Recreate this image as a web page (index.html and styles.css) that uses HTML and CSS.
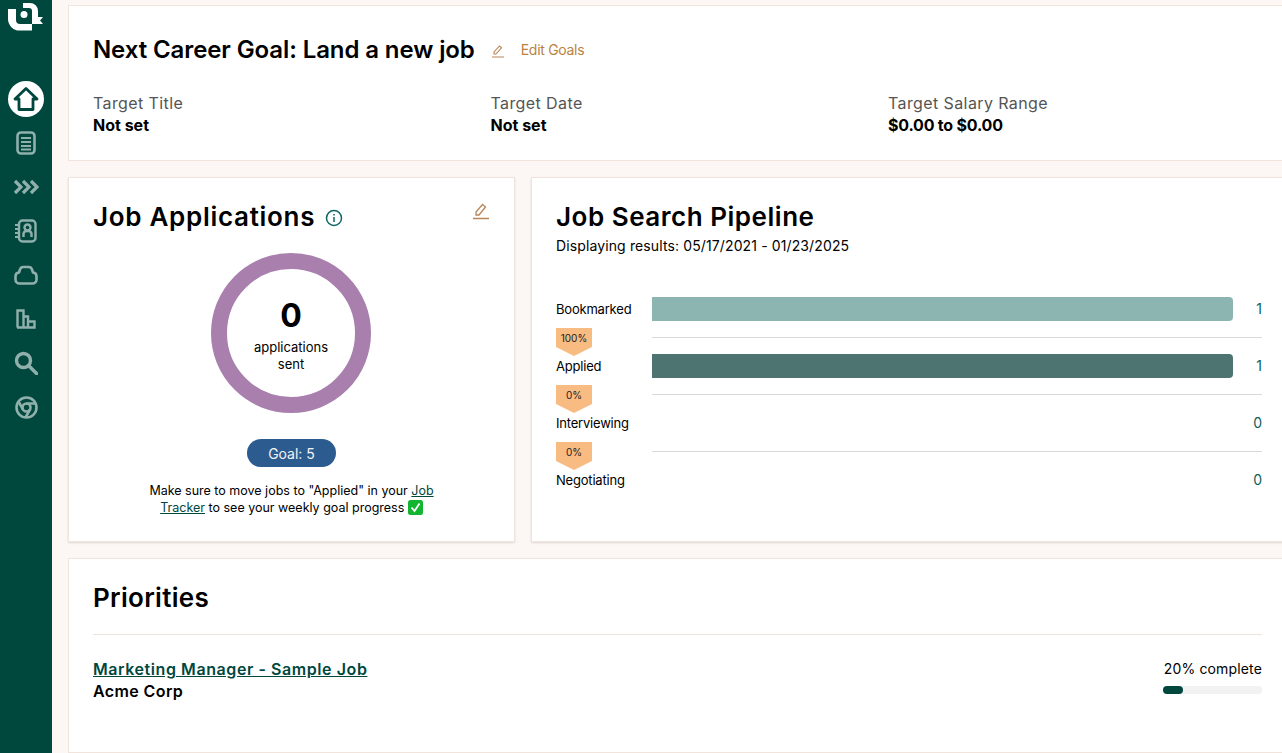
FILE: index.html
```html
<!DOCTYPE html>
<html lang="en">
<head>
<meta charset="utf-8">
<title>Dashboard</title>
<link rel="stylesheet" href="styles.css">
</head>
<body>
<div class="app">
  <nav class="sidebar">
    <svg class="logo" width="52" height="32" viewBox="0 0 52 32" fill="#fff">
      <path d="M8 9H16V20a4 4 0 0 0 4 4H32V30.500H19.500A11.500 11.500 0 0 1 8 19Z"/>
      <path d="M23 3H30a8 8 0 0 1 8 8V17H32V11a3 3 0 0 0-3-3H23Z"/>
      <path d="M32 17H43L40 20.500 43 24H32Z"/>
      <circle cx="24" cy="14.500" r="3.500"/>
    </svg>
    <div class="nav-list">
      <a class="nav-item active">
        <svg width="26" height="26" viewBox="0 0 26 26" fill="none" stroke="#00473e" stroke-width="2.800" stroke-linejoin="round"><path d="M13 2.500 2 13H6V23.500H20V13H24Z"/></svg>
      </a>
      <a class="nav-item">
        <svg width="20" height="24" viewBox="0 0 20 24" fill="none" stroke="#8fb0ab" stroke-width="2.600"><rect x="1.500" y="1.500" width="17" height="21" rx="3.500"/><path d="M5 7h10M5 11h10M5 15h10M5 18.500h10" stroke-width="2.200"/></svg>
      </a>
      <a class="nav-item">
        <svg width="26" height="16" viewBox="0 0 26 16" fill="none" stroke="#8fb0ab" stroke-width="3.200"><path d="M2 2l6 6-6 6M10 2l6 6-6 6M18 2l6 6-6 6"/></svg>
      </a>
      <a class="nav-item">
        <svg width="22" height="24" viewBox="0 0 22 24" fill="none" stroke="#8fb0ab" stroke-width="2.400"><rect x="4" y="1.500" width="16.500" height="21" rx="3.500"/><path d="M0 6h4M0 10h4M0 14h4M0 18h4" stroke-width="2"/><circle cx="12.500" cy="8.500" r="3"/><path d="M8.500 18v-3a3 3 0 0 1 3-3h2a3 3 0 0 1 3 3v3"/></svg>
      </a>
      <a class="nav-item">
        <svg width="24" height="20" viewBox="0 0 24 20" fill="none" stroke="#8fb0ab" stroke-width="2.600" stroke-linejoin="round"><path d="M6 4.500A3.500 3.500 0 0 1 9.500 2h5A3.500 3.500 0 0 1 18 4.500L19 7.500a4 4 0 0 1 3.500 4v3a4 4 0 0 1-4 4h-13a4 4 0 0 1-4-4v-3a4 4 0 0 1 3.500-4Z"/></svg>
      </a>
      <a class="nav-item">
        <svg width="20" height="20" viewBox="0 0 20 20" fill="none" stroke="#8fb0ab" stroke-width="2.400"><path d="M1.500 18.500V1.500h6v17M7.500 7.500h4.500v11M12 12.500h6.500v6H1"/></svg>
      </a>
      <a class="nav-item">
        <svg width="24" height="24" viewBox="0 0 24 24" fill="none" stroke="#8fb0ab" stroke-width="3.400"><circle cx="9.500" cy="9.500" r="7"/><path d="M14.500 14.500 23 23" stroke-linecap="round"/></svg>
      </a>
      <a class="nav-item">
        <svg width="23" height="23" viewBox="0 0 23 23" fill="none" stroke="#8fb0ab" stroke-width="2.600"><circle cx="11.500" cy="11.500" r="10"/><circle cx="11.500" cy="11.500" r="4"/><path d="M11.500 7.500h9.500M8 13.500 3.500 5.500M15 13.500 10.500 21.500"/></svg>
      </a>
    </div>
  </nav>
  <main class="main">
    <div class="content">
      <section class="card goal-card">
        <div class="goal-head">
          <h1 class="goal-title">Next Career Goal: Land a new job</h1>
          <svg class="pencil-small" width="14" height="14" viewBox="0 0 14 14" fill="none" stroke="#b9855a" stroke-width="1.100"><path d="M3 10V8l5.500-6 2 1.800L5 10zM1 13h12"/></svg>
          <a class="edit-link">Edit Goals</a>
        </div>
        <div class="goal-grid">
          <div><div class="goal-label">Target Title</div><div class="goal-value">Not set</div></div>
          <div><div class="goal-label">Target Date</div><div class="goal-value">Not set</div></div>
          <div><div class="goal-label">Target Salary Range</div><div class="goal-value salary">$0.00 to $0.00</div></div>
        </div>
      </section>
      <div class="middle">
        <section class="card apps-card">
          <div class="apps-head">
            <h2 class="section-title apps-title">Job Applications</h2>
            <svg class="info" width="18" height="18" viewBox="0 0 18 18" fill="none" stroke="#0d6763" stroke-width="1.500"><circle cx="9" cy="9" r="7.500"/><path d="M9 8v5M9 5v1.500"/></svg>
            <svg class="pencil" width="16" height="17" viewBox="0 0 16 17" fill="none" stroke="#b9855a" stroke-width="1.300"><path d="M3 12V9l6.500-7.500 3 2.500L6 12zM0 15.500h16"/></svg>
          </div>
          <div class="donut">
            <div class="donut-num">0</div>
            <div class="donut-text">applications<br>sent</div>
          </div>
          <div class="goal-pill">Goal: 5</div>
          <p class="note">Make sure to move jobs to "Applied" in your <a class="note-link">Job Tracker</a> to see your weekly goal progress <svg class="check" width="15" height="15" viewBox="0 0 15 15"><rect width="15" height="15" rx="2.500" fill="#12b52f"/><path d="M3.500 7.500 6.500 11 11.500 3.500" fill="none" stroke="#fff" stroke-width="1.800"/></svg></p>
        </section>
        <section class="card pipe-card">
          <h2 class="section-title pipe-title">Job Search Pipeline</h2>
          <div class="pipe-sub">Displaying results: 05/17/2021 - 01/23/2025</div>
          <div class="pipe">
            <div class="pipe-row">
              <div class="pipe-name">Bookmarked</div>
              <div class="pipe-track"><div class="pipe-bar light"></div></div>
              <div class="pipe-count">1</div>
            </div>
            <div class="pipe-row">
              <div class="pipe-name">Applied</div>
              <div class="pipe-track"><div class="pipe-bar dark"></div></div>
              <div class="pipe-count">1</div>
              <div class="tag">100%</div>
            </div>
            <div class="pipe-row">
              <div class="pipe-name">Interviewing</div>
              <div class="pipe-track"></div>
              <div class="pipe-count">0</div>
              <div class="tag">0%</div>
            </div>
            <div class="pipe-row">
              <div class="pipe-name">Negotiating</div>
              <div class="pipe-track"></div>
              <div class="pipe-count">0</div>
              <div class="tag">0%</div>
            </div>
          </div>
        </section>
      </div>
      <section class="card prio-card">
        <h2 class="section-title prio-title">Priorities</h2>
        <div class="prio-row">
          <div>
            <a class="prio-job">Marketing Manager - Sample Job</a>
            <div class="prio-company">Acme Corp</div>
          </div>
          <div class="prio-progress">
            <div class="prio-pct">20% complete</div>
            <div class="progress"><div class="progress-fill"></div></div>
          </div>
        </div>
      </section>
    </div>
  </main>
</div>
</body>
</html>
```
FILE: styles.css
```css
* { box-sizing: border-box; }
html, body { margin: 0; height: 100%; overflow: hidden; }
body { font-family: Inter, "Liberation Sans", sans-serif; color: #000; background: #fcf7f5; }
h1, h2, p { margin: 0; }
.app { display: flex; height: 753px; overflow: hidden; }
.sidebar { width: 52px; flex: none; background: #00473e; display: flex; flex-direction: column; align-items: center; }
.logo { display: block; height: 32px; flex: none; }
.nav-list { margin-top: 49px; display: flex; flex-direction: column; align-items: center; }
.nav-item { width: 36px; height: 44px; display: flex; align-items: center; justify-content: center; }
.nav-item.active { height: 36px; background: #fff; border-radius: 50%; margin-bottom: 4px; }
.main { flex: 1; min-width: 0; overflow: hidden; padding: 5px 0 0 16px; }
.content { width: 1218px; display: flex; flex-direction: column; gap: 16px; }
.card { background: #fff; border: 1px solid #f1e4dd; padding: 24px; }
.goal-card { height: 156px; }
.goal-head { display: flex; align-items: center; height: 42px; }
.goal-title { font-size: 24px; font-weight: 600; letter-spacing: -0.1px; line-height: 40px; margin-top: -2px; }
.pencil-small { margin-left: 16px; }
.edit-link { margin-left: 16px; margin-top: -3px; font-size: 14px; color: #b9823f; letter-spacing: -0.3px; }
.goal-grid { display: grid; grid-template-columns: 397.500px 397.500px 1fr; margin-top: 20px; }
.goal-label { font-size: 16px; line-height: 22px; color: #555; letter-spacing: 0.4px; }
.goal-value { font-size: 16px; line-height: 22px; font-weight: 700; }
.salary { letter-spacing: -0.2px; }
.middle { display: flex; gap: 16px; height: 365px; }
.apps-card { width: 447px; flex: none; display: flex; flex-direction: column; align-items: center; padding-top: 20px; box-shadow: 0 1px 2px rgba(0,0,0,.12); }
.apps-head { width: 100%; display: flex; align-items: center; position: relative; height: 38px; }
.section-title { font-size: 26px; font-weight: 600; line-height: 38px; }
.apps-title { letter-spacing: 0.7px; }
.pipe-title { letter-spacing: 0.52px; }
.info { margin-left: 10px; margin-top: 2px; }
.pencil { position: absolute; right: 1px; top: 5px; }
.donut { width: 160px; height: 160px; border-radius: 50%; border: 16px solid #a87fad; margin: 17px 1px 0 0; display: flex; flex-direction: column; align-items: center; justify-content: center; flex: none; }
.donut-num { font-size: 32px; font-weight: 700; line-height: 40px; margin-top: 2px; }
.donut-text { font-size: 13px; line-height: 17px; text-align: center; margin-top: 3px; }
.goal-pill { margin-top: 26px; width: 89px; height: 28px; border-radius: 14px; background: #2c5b90; color: #f3f3f3; font-size: 14px; display: flex; align-items: center; justify-content: center; }
.note { margin-top: 15px; width: 310px; font-size: 12.500px; line-height: 17px; text-align: center; }
.note-link { color: #00473e; text-decoration: underline; }
.check { vertical-align: -3px; }
.pipe-card { flex: 1; padding-top: 20px; box-shadow: 0 1px 2px rgba(0,0,0,.12); }
.pipe-sub { font-size: 14px; line-height: 20px; letter-spacing: 0.12px; }
.pipe { margin-top: 41px; }
.pipe-row { position: relative; display: flex; height: 57px; align-items: flex-start; }
.pipe-name { width: 96px; flex: none; font-size: 13px; line-height: 24px; letter-spacing: -0.2px; position: relative; z-index: 1; }
.pipe-track { width: 610px; height: 41px; flex: none; border-bottom: 1px solid #d9d9d9; }
.pipe-row:last-child .pipe-track { border-bottom: 0; }
.pipe-bar { width: 581px; height: 24px; border-radius: 0 4px 4px 0; }
.pipe-bar.light { background: #8cb5b2; }
.pipe-bar.dark { background: #4e7471; }
.pipe-count { position: absolute; left: 696px; width: 10px; text-align: right; font-size: 14px; line-height: 24px; color: #0d5f5a; }
.tag { position: absolute; left: 0; top: -26px; width: 36px; height: 28px; padding-top: 2px; background: #f8bb82; clip-path: polygon(0 0, 100% 0, 100% 19px, 50% 100%, 0 19px); font-size: 10px; line-height: 16px; text-align: center; color: #222; }
.prio-card { height: 195px; padding-top: 20px; }
.prio-title { padding-bottom: 17px; border-bottom: 1px solid #eee3dc; width: 1169px; letter-spacing: 0.3px; }
.prio-row { display: flex; justify-content: space-between; width: 1169px; margin-top: 24px; }
.prio-job { font-size: 16px; font-weight: 600; line-height: 20px; color: #00473e; text-decoration: underline; letter-spacing: 0.57px; }
.prio-company { font-size: 16px; font-weight: 600; line-height: 24px; letter-spacing: 0.4px; }
.prio-progress { width: 99px; }
.prio-pct { font-size: 14px; line-height: 20px; white-space: nowrap; text-align: right; letter-spacing: 0.15px; }
.progress { margin-top: 7px; height: 8px; border-radius: 4px; background: #f2f2f2; }
.progress-fill { width: 20px; height: 8px; border-radius: 4px; background: #00473e; }
```
